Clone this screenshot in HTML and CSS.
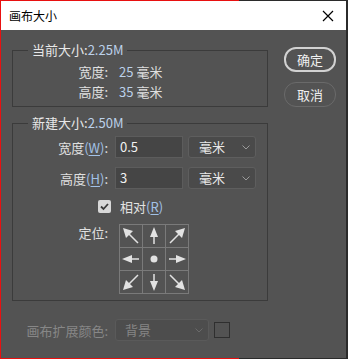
FILE: index.html
```html
<!DOCTYPE html>
<html>
<head>
<meta charset="utf-8">
<link rel="stylesheet" href="styles.css">
</head>
<body>
<div class="window">
  <div class="topline"></div>
  <div class="titlebar">
    <span class="title">画布大小</span>
    <svg class="close" width="12" height="12" viewBox="0 0 12 12"><path d="M1 1L11 11M11 1L1 11" stroke="#000" stroke-width="1.2"/></svg>
  </div>
  <div class="content">
    <div class="main">
      <fieldset class="group g1">
        <legend>当前大小:<span class="num">2.25M</span></legend>
        <div class="inforow"><span class="lbl">宽度:</span><span class="num">25</span><span class="unit">毫米</span></div>
        <div class="inforow"><span class="lbl">高度:</span><span class="num">35</span><span class="unit">毫米</span></div>
      </fieldset>
      <fieldset class="group g2">
        <legend>新建大小:<span class="num">2.50M</span></legend>
        <div class="formrow">
          <span class="lbl">宽度<span class="acc">(<u>W</u>)</span>:</span>
          <div class="input">0.5</div>
          <div class="select">毫米<svg class="chev" width="8" height="5" viewBox="0 0 8 5"><path d="M0.5 0.5L4 4L7.5 0.5" fill="none" stroke="#9a9a9a" stroke-width="1"/></svg></div>
        </div>
        <div class="formrow r2">
          <span class="lbl">高度<span class="acc">(<u>H</u>)</span>:</span>
          <div class="input">3</div>
          <div class="select">毫米<svg class="chev" width="8" height="5" viewBox="0 0 8 5"><path d="M0.5 0.5L4 4L7.5 0.5" fill="none" stroke="#9a9a9a" stroke-width="1"/></svg></div>
        </div>
        <div class="checkrow">
          <span class="check"><svg width="13" height="13" viewBox="0 0 13 13"><path d="M3 6.5L5.5 9L10 4" fill="none" stroke="#3a3a3a" stroke-width="1.8"/></svg></span>
          <span class="checklbl">相对<span class="acc">(<u>R</u>)</span></span>
        </div>
        <div class="anchorrow">
          <span class="lbl">定位:</span>
          <svg class="anchor" width="71" height="71" viewBox="0 0 71 71">
            <g stroke="#7a7a7a" stroke-width="1" fill="none">
              <rect x="0.5" y="0.5" width="69" height="69"/>
              <path d="M23.5 0.5V69.5M46.5 0.5V69.5M0.5 23.5H69.5M0.5 46.5H69.5"/>
            </g>
            <g fill="#e2e2e2" stroke="none">
              <polygon points="35,3 31,13 39,13"/>
              <polygon points="35,67 31,57 39,57"/>
              <polygon points="3,35 13,31 13,39"/>
              <polygon points="67,35 57,31 57,39"/>
              <polygon points="4,4 14,7 7,14"/>
              <polygon points="66,4 56,7 63,14"/>
              <polygon points="4,66 7,56 14,63"/>
              <polygon points="66,66 63,56 56,63"/>
              <circle cx="35" cy="35" r="3.5"/>
            </g>
            <g stroke="#e2e2e2" stroke-width="1.5" fill="none">
              <path d="M35 12V20M35 50V58M12 35H20M50 35H58M10 10L19 19M60 10L51 19M10 60L19 51M60 60L51 51"/>
            </g>
          </svg>
        </div>
      </fieldset>
      <div class="bottomrow">
        <span class="lbl dim">画布扩展颜色:</span>
        <div class="select disabled">背景<svg class="chev" width="8" height="5" viewBox="0 0 8 5"><path d="M0.5 0.5L4 4L7.5 0.5" fill="none" stroke="#6a6a6a" stroke-width="1"/></svg></div>
        <div class="swatch"></div>
      </div>
    </div>
    <div class="buttons">
      <div class="btn primary">确定</div>
      <div class="btn">取消</div>
    </div>
  </div>
  <div class="bottomline"></div>
</div>
</body>
</html>
```
FILE: styles.css
```css
* { box-sizing: border-box; }
html, body { margin: 0; padding: 0; background: #535353; }
body { font-family: "Noto Sans CJK SC", "Noto Sans", sans-serif; font-size: 13px; color: #dedede; }
.window {
  width: 348px; height: 359px;
  display: flex; flex-direction: column;
  border-left: 1px solid #e81010;
  border-right: 2px solid #2b2b2b;
  background: #535353;
}
.topline { height: 1px; background: linear-gradient(to right, #e81010 238px, #2b2b2b 238px); flex: none; }
.bottomline { height: 1px; background: linear-gradient(to right, #e81010 238px, #2b2b2b 238px); flex: none; margin-top: auto; }
.titlebar {
  height: 29px; background: #fff; flex: none;
  display: flex; align-items: center; justify-content: space-between;
  padding: 0 12px 0 8px;
}
.title { font-size: 12px; color: #000; line-height: 16px; }
.close { display: block; }
.content { display: flex; align-items: flex-start; flex: none; }
.main { width: 270px; padding: 11px 0 0 11px; flex: none; }
.group {
  margin: 0; padding: 0 0 4px 0;
  border: 1px solid #3b3b3b;
  width: 256px;
  min-width: 0;
}
.group legend {
  margin-left: 15px; padding: 0 4px;
  line-height: 18px; height: 18px;
  color: #e8e8e8;
}
.num { color: #bcd1ea; }
.g1 { padding-top: 3px; padding-bottom: 4px; }
.inforow { display: flex; align-items: center; height: 20px; line-height: 20px; }
.inforow .lbl { width: 95px; text-align: right; }
.inforow .num { margin-left: 11px; }
.inforow .unit { margin-left: 3px; }
.g2 { margin-top: 7px; padding-top: 4px; padding-bottom: 5px; }
.formrow { display: flex; align-items: center; height: 22px; }
.formrow.r2 { margin-top: 9px; }
.lbl { width: 95px; text-align: right; color: #e0e0e0; flex: none; }
.acc { color: #a2c1e6; }
.acc u { text-decoration-thickness: 1px; text-underline-offset: 2px; }
.input {
  margin-left: 7px; width: 68px; height: 22px;
  background: #454545; border: 1px solid #5c5c5c;
  color: #f2f2f2; padding-left: 4px; line-height: 20px;
  flex: none;
}
.select {
  margin-left: 5px; width: 68px; height: 22px;
  background: #4a4a4a; border: 1px solid #5e5e5e; border-radius: 3px;
  display: flex; align-items: center; justify-content: space-between;
  padding: 0 5px 0 10px; color: #e8e8e8; line-height: 20px; flex: none;
}
.chev { display: block; margin-top: 1px; }
.checkrow { display: flex; align-items: center; height: 16px; margin-top: 9px; }
.check {
  margin-left: 85px; width: 13px; height: 13px;
  background: #d8d8d8; border-radius: 2px; display: block;
}
.check svg { display: block; }
.checklbl { margin-left: 9px; color: #e2e2e2; }
.anchorrow { display: flex; align-items: flex-start; margin-top: 10px; }
.anchorrow .lbl { line-height: 18px; margin-top: 0px; }
.anchor { display: block; margin-left: 11px; }
.bottomrow { display: flex; align-items: center; margin-top: 18px; height: 22px; }
.bottomrow .lbl { width: 96px; }
.dim { color: #878787 !important; }
.select.disabled {
  width: 94px; margin-left: 7px;
  background: #4d4d4d; border-color: #5a5a5a; color: #858585;
  padding-left: 9px;
}
.swatch { margin-left: 5px; width: 16px; height: 16px; border: 1px solid #2f2f2f; flex: none; }
.buttons { display: flex; flex-direction: column; gap: 10px; margin-top: 17px; margin-left: 13px; }
.btn {
  width: 52px; height: 25px; border-radius: 12px;
  border: 1.5px solid #6a6a6a;
  color: #f0f0f0; display: flex; align-items: center; justify-content: center;
  line-height: 16px;
}
.btn.primary { border: 2px solid #d2d2d2; }
```
